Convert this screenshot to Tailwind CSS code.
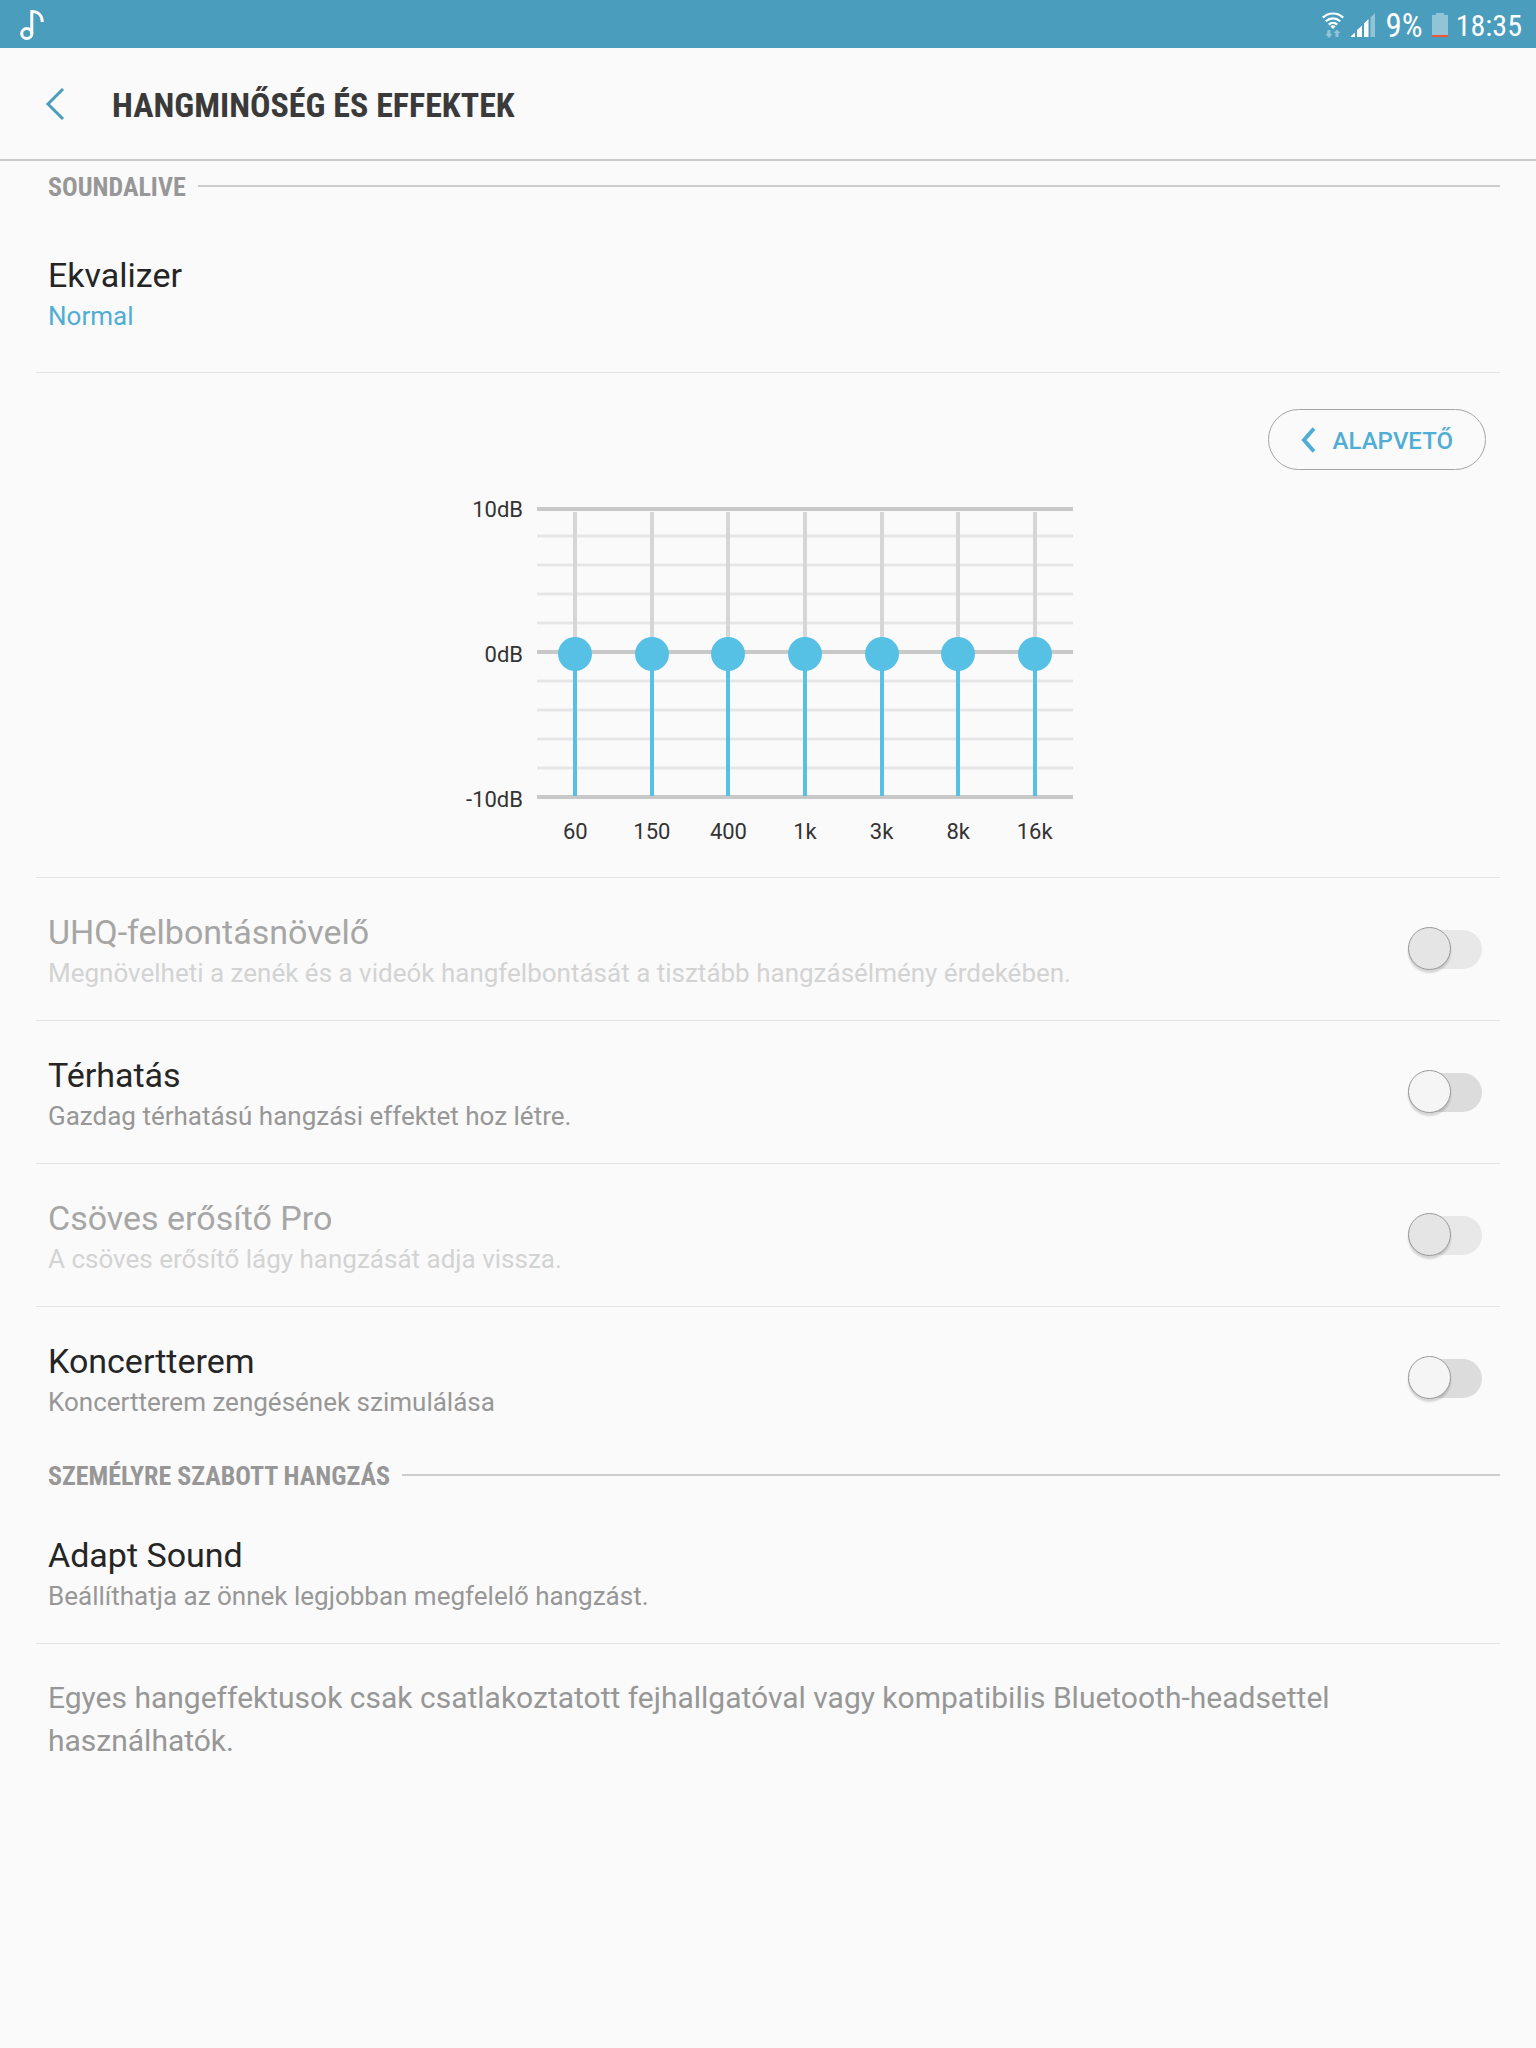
<!DOCTYPE html>
<html lang="hu">
<head>
    <meta charset="UTF-8">
    <meta name="viewport" content="width=device-width, initial-scale=1.0">
    <title>Hangminőség és effektek</title>
    <script src="https://cdn.jsdelivr.net/npm/@tailwindcss/browser@4"></script>
</head>
<body class="min-h-screen bg-[#fafafa] font-[Roboto,sans-serif] text-[#252525]">
    <!-- Status bar -->
    <div class="flex h-12 items-center justify-between bg-[#4a9dbd] pt-0.5 pr-[14px] pl-5 text-white">
        <svg class="h-[30px] w-6" viewBox="0 0 24 30" fill="none" stroke="currentColor" stroke-width="3">
            <ellipse cx="6.8" cy="23.5" rx="5.1" ry="5"/>
            <path d="M11.8 24V1.6C18 1.6 22.3 5.4 22.3 12"/>
        </svg>
        <div class="flex items-center font-['Roboto_Condensed',Roboto,sans-serif] text-[30px] leading-10">
            <svg class="mr-[7px] h-[26px] w-[22px]" viewBox="0 0 22 26">
                <g fill="none" stroke="#fff" stroke-width="2.2">
                    <path d="M.8 5.6C6.5.1 15.5.1 21.2 5.6"/>
                    <path d="M3.8 9.2C8 5.3 14 5.3 18.2 9.2"/>
                    <path d="M6.8 12.6C9.2 10.3 12.8 10.3 15.2 12.6"/>
                </g>
                <path d="M11 17L8.3 14.3Q11 12.3 13.7 14.3Z" fill="#fff"/>
                <path d="M5.5 18h3v4h2L7 26l-3.500-4h1.500z M13.500 25v-4h-2l3.500-3.500 3.500 3.500h-2v4z" fill="#92c4d7"/>
            </svg>
            <svg class="mr-[11px] h-6 w-6" viewBox="0 0 24 24">
                <path d="M0 24v-1l4-3.500V24zM6 24v-7l5-4.500V24zM13 24V10.500L17.500 6v18z" fill="#fff"/>
                <path d="M19.500 24V4.500L24 0v24z" fill="#92c4d7"/>
            </svg>
            <span class="mr-[9px] pt-0.5 text-[33px]">9%</span>
            <svg class="mr-2 h-6 w-4" viewBox="0 0 16 24">
                <path d="M4 0h8v2h4v20H0V2h4z" fill="#92c4d7"/>
                <path d="M0 22h16v1.500l-.5.5H.5L0 23.500z" fill="#f0562f"/>
            </svg>
            <span class="pt-0.5">18:35</span>
        </div>
    </div>

    <header class="flex h-[113px] items-center border-b-2 border-[#cdcdcd] pl-[45px]">
        <button type="button" aria-label="Vissza" class="mr-[47px] cursor-pointer">
            <svg class="h-8 w-5 text-[#4a9dbd]" viewBox="0 0 20 32" fill="none" stroke="currentColor" stroke-width="3">
                <path d="M18 1L3 16l15 15"/>
            </svg>
        </button>
        <h1 class="pt-0.5 font-['Roboto_Condensed',Roboto,sans-serif] text-[34px] leading-10 font-bold text-[#3a3a3a]">HANGMINŐSÉG ÉS EFFEKTEK</h1>
    </header>

    <main class="pr-9 pl-9">
        <section>
            <div class="flex items-center gap-3 pt-[11px] pl-3">
                <h2 class="font-['Roboto_Condensed',Roboto,sans-serif] text-[26px] leading-[30px] font-bold text-[#979797]">SOUNDALIVE</h2>
                <div class="mb-0.5 h-0.5 grow bg-[#cdcdcd]"></div>
            </div>

            <div class="border-b border-[#e3e3e3] pt-[53px] pb-[41px] pl-3">
                <p class="text-[34px] leading-10">Ekvalizer</p>
                <p class="mt-1.5 text-[26px] leading-[30px] text-[#50aed4]">Normal</p>
            </div>

            <!-- Equalizer -->
            <div class="border-b border-[#e3e3e3] pt-9 pb-8">
                <div class="flex justify-end pr-[14px]">
                    <button type="button" class="flex h-[61px] cursor-pointer items-center gap-4 rounded-full border border-[#a5a5a5] pr-8 pl-8 text-2xl font-medium text-[#50aed4]">
                        <svg class="h-[26px] w-4" viewBox="0 0 16 26" fill="none" stroke="currentColor" stroke-width="4">
                            <path d="M13 1.500L3 13l10 11.500"/>
                        </svg>
                        <span class="pt-0.5">ALAPVETŐ</span>
                    </button>
                </div>
                <div class="mt-[27px] flex justify-center gap-[14px] text-[22px] leading-[26px] text-[#333]">
                    <div class="flex h-[316px] w-[60px] flex-col items-end justify-between">
                        <span>10dB</span>
                        <span>0dB</span>
                        <span>-10dB</span>
                    </div>
                    <div class="w-[536px] pt-[10px]">
                        <div class="relative h-[292px]">
                            <div class="absolute inset-0 flex flex-col gap-[25px]">
                                <div class="-mb-0.5 h-1 shrink-0 bg-[#c8c8c8]"></div>
                                <div class="h-1 shrink-0 border-y border-[#f1f1f1] bg-[#e6e6e6]"></div>
                                <div class="h-1 shrink-0 border-y border-[#f1f1f1] bg-[#e6e6e6]"></div>
                                <div class="h-1 shrink-0 border-y border-[#f1f1f1] bg-[#e6e6e6]"></div>
                                <div class="h-1 shrink-0 border-y border-[#f1f1f1] bg-[#e6e6e6]"></div>
                                <div class="h-1 shrink-0 bg-[#c8c8c8]"></div>
                                <div class="h-1 shrink-0 border-y border-[#f1f1f1] bg-[#e6e6e6]"></div>
                                <div class="h-1 shrink-0 border-y border-[#f1f1f1] bg-[#e6e6e6]"></div>
                                <div class="h-1 shrink-0 border-y border-[#f1f1f1] bg-[#e6e6e6]"></div>
                                <div class="h-1 shrink-0 border-y border-[#f1f1f1] bg-[#e6e6e6]"></div>
                                <div class="h-1 shrink-0 bg-[#c8c8c8]"></div>
                            </div>
                            <div id="sliders" class="absolute inset-x-0 top-[5px] grid grid-cols-7 justify-items-center"></div>
                        </div>
                        <div id="bands" class="mt-5 grid grid-cols-7 text-center"></div>
                    </div>
                </div>
            </div>

            <label class="flex items-center justify-between border-b border-[#e3e3e3] pt-[34px] pr-[18px] pb-8 pl-3">
                <span>
                    <span class="block text-[34px] leading-10 text-[#a6a6a6]">UHQ-felbontásnövelő</span>
                    <span class="mt-1.5 block text-[26px] leading-[30px] text-[#d3d3d3]">Megnövelheti a zenék és a videók hangfelbontását a tisztább hangzásélmény érdekében.</span>
                </span>
                <input type="checkbox" disabled class="mb-0.5 h-[39px] w-[74px] shrink-0 appearance-none rounded-full bg-[#e8e8e8] before:-mt-[3px] before:block before:size-[43px] before:rounded-full before:border before:border-[#9a9a9a] before:bg-[#e5e5e5] before:shadow-[0_3px_2px_rgba(0,0,0,0.15)] before:content-[''] checked:before:ml-[31px]">
            </label>

            <label class="flex cursor-pointer items-center justify-between border-b border-[#e3e3e3] pt-[34px] pr-[18px] pb-8 pl-3">
                <span>
                    <span class="block text-[34px] leading-10">Térhatás</span>
                    <span class="mt-1.5 block text-[26px] leading-[30px] text-[#979797]">Gazdag térhatású hangzási effektet hoz létre.</span>
                </span>
                <input type="checkbox" class="mb-0.5 h-[39px] w-[74px] shrink-0 appearance-none rounded-full bg-[#dcdcdc] before:-mt-[3px] before:block before:size-[43px] before:rounded-full before:border before:border-[#9a9a9a] before:bg-[#f5f5f5] before:shadow-[0_3px_2px_rgba(0,0,0,0.15)] before:content-[''] checked:bg-[#54c0e6] checked:before:ml-[31px]">
            </label>

            <label class="flex items-center justify-between border-b border-[#e3e3e3] pt-[34px] pr-[18px] pb-8 pl-3">
                <span>
                    <span class="block text-[34px] leading-10 text-[#a6a6a6]">Csöves erősítő Pro</span>
                    <span class="mt-1.5 block text-[26px] leading-[30px] text-[#d3d3d3]">A csöves erősítő lágy hangzását adja vissza.</span>
                </span>
                <input type="checkbox" disabled class="mb-0.5 h-[39px] w-[74px] shrink-0 appearance-none rounded-full bg-[#e8e8e8] before:-mt-[3px] before:block before:size-[43px] before:rounded-full before:border before:border-[#9a9a9a] before:bg-[#e5e5e5] before:shadow-[0_3px_2px_rgba(0,0,0,0.15)] before:content-[''] checked:before:ml-[31px]">
            </label>

            <label class="flex cursor-pointer items-center justify-between pt-[34px] pr-[18px] pb-8 pl-3">
                <span>
                    <span class="block text-[34px] leading-10">Koncertterem</span>
                    <span class="mt-1.5 block text-[26px] leading-[30px] text-[#979797]">Koncertterem zengésének szimulálása</span>
                </span>
                <input type="checkbox" class="mb-0.5 h-[39px] w-[74px] shrink-0 appearance-none rounded-full bg-[#dcdcdc] before:-mt-[3px] before:block before:size-[43px] before:rounded-full before:border before:border-[#9a9a9a] before:bg-[#f5f5f5] before:shadow-[0_3px_2px_rgba(0,0,0,0.15)] before:content-[''] checked:bg-[#54c0e6] checked:before:ml-[31px]">
            </label>
        </section>

        <section>
            <div class="flex items-center gap-3 pt-3 pl-3">
                <h2 class="font-['Roboto_Condensed',Roboto,sans-serif] text-[26px] leading-[30px] font-bold text-[#979797]">SZEMÉLYRE SZABOTT HANGZÁS</h2>
                <div class="mb-0.5 h-0.5 grow bg-[#cdcdcd]"></div>
            </div>

            <div class="border-b border-[#e3e3e3] pt-11 pb-8 pl-3">
                <p class="text-[34px] leading-10">Adapt Sound</p>
                <p class="mt-1.5 text-[26px] leading-[30px] text-[#979797]">Beállíthatja az önnek legjobban megfelelő hangzást.</p>
            </div>
        </section>

        <p class="px-3 pt-8 text-[30px] leading-[43px] text-[#979797]">Egyes hangeffektusok csak csatlakoztatott fejhallgatóval vagy kompatibilis Bluetooth-headsettel használhatók.</p>
    </main>

    <script>
        const bands = ['60', '150', '400', '1k', '3k', '8k', '16k'];
        const sliders = document.getElementById('sliders');
        const labels = document.getElementById('bands');

        bands.forEach(band => {
            sliders.innerHTML += `
                <input type="range" id="band-${band}" min="-10" max="10" value="0" style="--level: 50%"
                    class="m-0 h-[284px] w-[34px] cursor-pointer appearance-none bg-transparent [direction:rtl] [writing-mode:vertical-lr] [&::-webkit-slider-runnable-track]:w-1 [&::-webkit-slider-runnable-track]:bg-[linear-gradient(to_top,#57c0e5_var(--level),#d6d6d6_var(--level))] [&::-webkit-slider-thumb]:-ml-[15px] [&::-webkit-slider-thumb]:size-[34px] [&::-webkit-slider-thumb]:appearance-none [&::-webkit-slider-thumb]:rounded-full [&::-webkit-slider-thumb]:bg-[#57c0e5]">
            `;
            labels.innerHTML += `<label for="band-${band}">${band}</label>`;
        });

        sliders.addEventListener('input', function(event) {
            const level = (Number(event.target.value) + 10) * 5;
            event.target.style.setProperty('--level', level + '%');
        });
    </script>
</body>
</html>
